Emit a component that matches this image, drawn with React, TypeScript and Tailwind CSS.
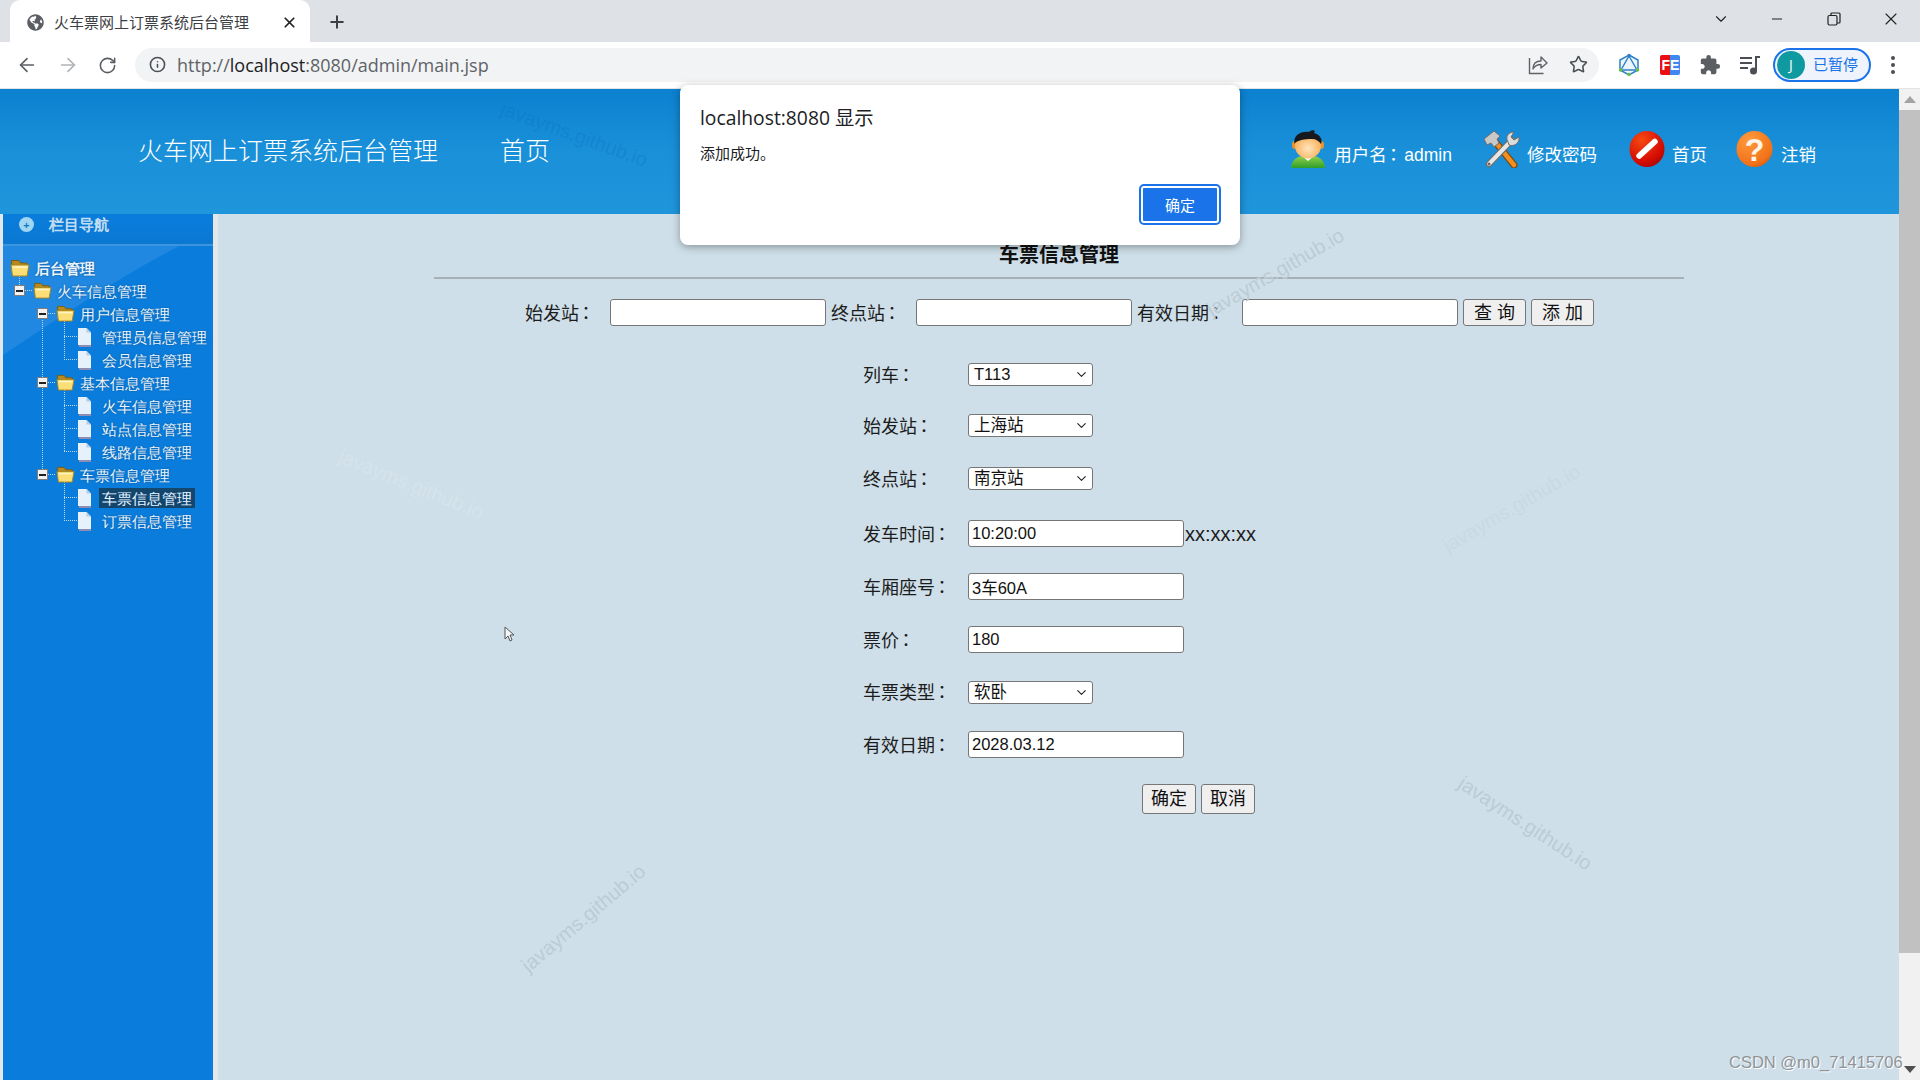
import { ArrowLeft, ArrowRight, ChevronDown, Info, Minus, Plus, RotateCw, Star, X } from 'lucide-react'
import { FaGlobeAmericas } from 'react-icons/fa'
import { MdExtension } from 'react-icons/md'

const fontUi = "font-['Open_Sans','Noto_Sans_CJK_SC',sans-serif]"

const treeRows = [
  { level: 0, kind: 'root', label: '后台管理' },
  { level: 1, kind: 'folder', label: '火车信息管理' },
  { level: 2, kind: 'folder', label: '用户信息管理' },
  { level: 3, kind: 'doc', label: '管理员信息管理' },
  { level: 3, kind: 'doc', label: '会员信息管理' },
  { level: 2, kind: 'folder', label: '基本信息管理' },
  { level: 3, kind: 'doc', label: '火车信息管理' },
  { level: 3, kind: 'doc', label: '站点信息管理' },
  { level: 3, kind: 'doc', label: '线路信息管理' },
  { level: 2, kind: 'folder', label: '车票信息管理' },
  { level: 3, kind: 'doc', label: '车票信息管理', selected: true },
  { level: 3, kind: 'doc', label: '订票信息管理' },
]

const watermarks = [
  { cls: 'left-[497px] top-[118px] rotate-[20deg] text-[#0b6fb8]/30' },
  { cls: 'left-[1198px] top-[256px] rotate-[-30deg] text-[#bccbd5]' },
  { cls: 'left-[334px] top-[468px] rotate-[22deg] text-[#d6e3eb]' },
  { cls: 'left-[1434px] top-[492px] rotate-[-30deg] text-[#c9d9e3]' },
  { cls: 'left-[1448px] top-[807px] rotate-[33deg] text-[#bccbd5]' },
  { cls: 'left-[506px] top-[902px] rotate-[-40deg] text-[#bccbd5]' },
]

function Colon() {
  return <span className="font-['Noto_Sans_CJK_TC',sans-serif] -ml-[2px]">：</span>
}

function FolderIcon({ className }: { className?: string }) {
  return (
    <svg viewBox="0 0 20 18" className={className}>
      <path d="M1.5 1.5h7l2 2.5h6.5v4H2z" fill="#b88a1c" stroke="#7a5c10" strokeWidth="1" />
      <path d="M1 6h18l-2 11H2.5z" fill="#fbdf76" stroke="#a9851f" strokeWidth="1" />
      <path d="M3 8h14.5" stroke="#fff6c8" strokeWidth="1.6" />
    </svg>
  )
}

function DocIcon() {
  return (
    <svg viewBox="0 0 16 20" className="w-[16px] h-[20px]">
      <path d="M2 3.5h8l4 4V20H2z" fill="#8f8db4" />
      <path d="M1 1h8.5L14 5.5V18H1z" fill="#e6f1fb" />
      <path d="M9.5 1v4.5H14z" fill="#b8cbe0" />
    </svg>
  )
}

function Toggle() {
  return (
    <span className="flex items-center justify-center w-[11px] h-[11px] bg-[#f2f2f2] border border-[#7d7d7d]">
      <span className="w-[7px] h-[2px] bg-[#222]" />
    </span>
  )
}

function TreeRow({ level, kind, label, selected }: { level: number; kind: string; label: string; selected?: boolean }) {
  const textStyle = 'whitespace-nowrap text-[15px] leading-[20px] text-[#eaf5fd] [text-shadow:0_0_2px_#0b4f8c]'
  if (kind === 'root') {
    return (
      <div className="h-[23px] flex items-center pl-[7px]">
        <FolderIcon className="w-[20px] h-[18px]" />
        <span className={`ml-[5px] font-bold ${textStyle}`}>{label}</span>
      </div>
    )
  }
  if (kind === 'folder') {
    return (
      <div className={`h-[23px] flex items-center ${level === 1 ? 'pl-[11px]' : 'pl-[34px]'}`}>
        <Toggle />
        <FolderIcon className="ml-[8px] w-[19px] h-[17px]" />
        <span className={`ml-[5px] ${textStyle}`}>{label}</span>
      </div>
    )
  }
  return (
    <div className="h-[23px] flex items-center pl-[74px]">
      <DocIcon />
      <span className={`ml-[6px] px-[3px] ${textStyle} ${selected ? 'bg-[#15466b] text-[#c4e2f4]' : ''}`}>{label}</span>
    </div>
  )
}

function TreeLines() {
  const h = [
    [19, 33, 34.5],
    [42, 56, 57.5],
    [64, 77, 80.5],
    [64, 77, 103.5],
    [42, 56, 126.5],
    [64, 77, 149.5],
    [64, 77, 172.5],
    [64, 77, 195.5],
    [42, 56, 218.5],
    [64, 77, 241.5],
    [64, 77, 264.5],
  ]
  const v = [
    [19, 20, 34],
    [42, 62, 218],
    [64, 65, 103.5],
    [64, 134, 195.5],
    [64, 226, 264.5],
  ]
  return (
    <svg className="absolute left-[-3px] top-0 w-[210px] h-[280px]" stroke="#b9d8f0" strokeWidth="1" strokeDasharray="1 1">
      {h.map(([a, b, y], i) => (
        <line key={i} x1={a} x2={b} y1={y} y2={y} />
      ))}
      {v.map(([x, a, b], i) => (
        <line key={i} x1={x + 0.5} x2={x + 0.5} y1={a} y2={b} />
      ))}
    </svg>
  )
}

function Sidebar() {
  return (
    <div className="relative w-[218px] shrink-0 flex border-l-[3px] border-[#e3e8ec] border-r-[5px] border-r-[#e4e7ea] bg-[#0a7ddc] overflow-hidden">
      <svg className="absolute left-0 top-[31px] w-[190px] h-[110px]" viewBox="0 0 190 110">
        <path d="M0 0H178C120 30 60 70 0 110z" fill="#3c97e4" opacity="0.45" />
      </svg>
      <div className="relative w-full">
        <div className="h-[32px] flex items-start pl-[16px] border-b-2 border-[#3d94de] bg-gradient-to-b from-[#0a7ddc] to-[#0b78d2]">
          <span className="mt-[3px] w-[15px] h-[15px] rounded-full bg-[#9fd6f2] flex items-center justify-center text-[#1477c8] text-[11px] leading-none font-bold">+</span>
          <span className="ml-[15px] text-[15px] leading-[20px] font-bold text-[#c5dff2]">栏目导航</span>
        </div>
        <div className="relative mt-[10px]">
          <TreeLines />
          <div className="relative">
            {treeRows.map((row, i) => (
              <TreeRow key={i} {...row} />
            ))}
          </div>
        </div>
      </div>
    </div>
  )
}

function SearchField({ label, width }: { label: string; width: string }) {
  return (
    <>
      <span className={`${width} shrink-0 pt-[2px]`}>{label}<Colon /></span>
      <input readOnly className="w-[216px] h-[27px] bg-white border-[1.5px] border-[#767676] rounded-[3px]" />
    </>
  )
}

function SmallButton({ label, className }: { label: string; className: string }) {
  return (
    <button className={`${className} bg-[#efefef] border border-[#767676] rounded-[3px] text-[18px] leading-none text-[#111]`}>{label}</button>
  )
}

function FormRow({ label, className, children }: { label: string; className: string; children: React.ReactNode }) {
  return (
    <div className={`flex items-center pl-[645px] ${className}`}>
      <span className="w-[105px] shrink-0 pt-[1px]">{label}<Colon /></span>
      {children}
    </div>
  )
}

function SelectBox({ value }: { value: string }) {
  return (
    <div className="relative w-[125px] h-[23px] bg-white border border-[#767676] rounded-[3px] flex items-center pl-[5px] text-[16.5px] leading-none text-[#111]">
      {value}
      <ChevronDown className="absolute right-[3px] top-[3px] w-[15px] h-[15px] text-[#222]" strokeWidth={1.8} />
    </div>
  )
}

function TextBox({ value }: { value: string }) {
  return (
    <input
      readOnly
      value={value}
      className="w-[216px] h-[27px] bg-white border-[1.5px] border-[#767676] rounded-[3px] px-[3px] text-[16.5px] text-[#111]"
    />
  )
}

function TicketForm() {
  return (
    <div className="relative flex-1 bg-[#cfdfe9] font-['Liberation_Sans','Noto_Sans_CJK_SC',sans-serif] text-[18px] text-[#1c1c1c]">
      <div className="pt-[27px] pl-[216px] pr-[215px]">
        <div className="text-center text-[20px] leading-[28px] font-bold text-[#111]">车票信息管理</div>
        <div className="mt-[8px] h-[2px] bg-[#a9b0b5]" />
      </div>
      <div className="mt-[20px] flex items-center pl-[307px] h-[27px]">
        <SearchField label="始发站" width="w-[85px]" />
        <span className="w-[5px]" />
        <SearchField label="终点站" width="w-[85px]" />
        <span className="w-[5px]" />
        <SearchField label="有效日期" width="w-[105px]" />
        <SmallButton label="查 询" className="ml-[5px] w-[63px] h-[27px]" />
        <SmallButton label="添 加" className="ml-[5px] w-[63px] h-[27px]" />
      </div>
      <FormRow label="列车" className="mt-[37px] h-[23px]">
        <SelectBox value="T113" />
      </FormRow>
      <FormRow label="始发站" className="mt-[28px] h-[23px]">
        <SelectBox value="上海站" />
      </FormRow>
      <FormRow label="终点站" className="mt-[30px] h-[23px]">
        <SelectBox value="南京站" />
      </FormRow>
      <FormRow label="发车时间" className="mt-[30px] h-[27px]">
        <TextBox value="10:20:00" />
        <span className="ml-[1px] text-[20px]">xx:xx:xx</span>
      </FormRow>
      <FormRow label="车厢座号" className="mt-[26px] h-[27px]">
        <TextBox value="3车60A" />
      </FormRow>
      <FormRow label="票价" className="mt-[26px] h-[27px]">
        <TextBox value="180" />
      </FormRow>
      <FormRow label="车票类型" className="mt-[27px] h-[24px]">
        <SelectBox value="软卧" />
      </FormRow>
      <FormRow label="有效日期" className="mt-[27px] h-[27px]">
        <TextBox value="2028.03.12" />
      </FormRow>
      <div className="mt-[26px] flex pl-[924px] gap-[5px]">
        <SmallButton label="确定" className="w-[54px] h-[30px]" />
        <SmallButton label="取消" className="w-[54px] h-[30px]" />
      </div>
    </div>
  )
}

function AvatarIcon() {
  return (
    <svg viewBox="0 0 36 38" className="w-[36px] h-[38px]">
      <defs>
        <linearGradient id="shirt" x1="0" y1="0" x2="0" y2="1">
          <stop offset="0" stopColor="#8fd14a" />
          <stop offset="1" stopColor="#2f9f2a" />
        </linearGradient>
        <radialGradient id="face" cx="0.5" cy="0.6" r="0.6">
          <stop offset="0" stopColor="#ffe6bd" />
          <stop offset="1" stopColor="#f7a94e" />
        </radialGradient>
      </defs>
      <path d="M1 38c0-7 5-11 11-12l6 3 6-3c6 1 11 5 11 12z" fill="url(#shirt)" />
      <path d="M12 26l6 5 6-5-2-3h-8z" fill="#fff" />
      <ellipse cx="4.5" cy="15" rx="2.5" ry="4" fill="#e7952f" />
      <ellipse cx="31.5" cy="15" rx="2.5" ry="4" fill="#e7952f" />
      <ellipse cx="18" cy="16" rx="13" ry="12.5" fill="url(#face)" />
      <path d="M4.5 14C3 6 10 1 19 2c2-2 5-2 6-1-1 1-1 2-1 2 6 2 9 6 7 11-2-3-5-5-9-5-7 0-15 1-18 5z" fill="#16191d" />
    </svg>
  )
}

function ToolsIcon() {
  return (
    <svg viewBox="0 0 40 38" className="w-[40px] h-[38px]">
      <path d="M33 35L12 9" stroke="#7a4a12" strokeWidth="7" strokeLinecap="round" />
      <path d="M33 35L12 9" stroke="#f18f1f" strokeWidth="4.5" strokeLinecap="round" />
      <path d="M3 9l10-8 6 5-3 3 2 4-5 4-3-4-4 2z" fill="#c8c8c8" stroke="#6d6d6d" strokeWidth="1" />
      <path d="M8 34L31 10" stroke="#6d6d6d" strokeWidth="6.5" strokeLinecap="round" />
      <path d="M8 34L31 10" stroke="#e6e6e6" strokeWidth="4" strokeLinecap="round" />
      <path d="M27 12c-3-5 0-10 6-10l-3 5 3 3 5-3c1 6-5 10-10 8z" fill="#dcdcdc" stroke="#6d6d6d" strokeWidth="1" />
      <circle cx="8" cy="34" r="1.5" fill="#666" />
    </svg>
  )
}

function HomeIcon() {
  return (
    <svg viewBox="0 0 37 38" className="w-[36px] h-[38px]">
      <defs>
        <radialGradient id="red" cx="0.35" cy="0.25" r="0.85">
          <stop offset="0" stopColor="#f64a10" />
          <stop offset="0.7" stopColor="#d60d02" />
          <stop offset="1" stopColor="#a50505" />
        </radialGradient>
      </defs>
      <ellipse cx="18.5" cy="19" rx="18" ry="18.5" fill="url(#red)" />
      <path d="M10.5 26L26.5 11.5" stroke="#fff" strokeWidth="6" strokeLinecap="round" />
    </svg>
  )
}

function HelpIcon() {
  return (
    <svg viewBox="0 0 38 38" className="w-[37px] h-[38px]">
      <defs>
        <radialGradient id="orange" cx="0.35" cy="0.25" r="0.9">
          <stop offset="0" stopColor="#ff9a3a" />
          <stop offset="0.75" stopColor="#f1721a" />
          <stop offset="1" stopColor="#c65208" />
        </radialGradient>
      </defs>
      <ellipse cx="19" cy="19" rx="18.5" ry="18.5" fill="url(#orange)" />
      <text x="19" y="31" textAnchor="middle" fontFamily="Liberation Sans" fontWeight="700" fontSize="33" fill="#fdf3e6">?</text>
    </svg>
  )
}

function GraphqlIcon() {
  return (
    <svg viewBox="0 0 22 24" className="w-[22px] h-[24px]">
      <path d="M11 2L20 7v10l-9 5-9-5V7z" fill="#d5ecf9" fillOpacity="0.5" stroke="#2f80c8" strokeWidth="1.5" />
      <path d="M11 3L19 17H3z" fill="none" stroke="#2f80c8" strokeWidth="1.4" />
      <circle cx="11" cy="2.5" r="1.8" fill="#2f80c8" />
      <circle cx="2.5" cy="17" r="1.8" fill="#6cc04a" />
      <circle cx="19.5" cy="17" r="1.8" fill="#6cc04a" />
      <circle cx="11" cy="21.5" r="1.8" fill="#6cc04a" />
    </svg>
  )
}

function FeBadge() {
  return (
    <div className="relative flex w-[20px] h-[20px] rounded-[2px] overflow-hidden text-[14px] leading-[20px] font-bold text-white font-['Liberation_Sans',sans-serif]">
      <span className="w-[10px] bg-[#ea0f12] text-right">F</span>
      <span className="w-[10px] bg-[#3f86f0]">E</span>
    </div>
  )
}

function MusicIcon() {
  return (
    <svg viewBox="0 0 22 20" className="w-[22px] h-[20px]" fill="none" stroke="#4b4f55" strokeWidth="2">
      <path d="M1 3h12M1 8h12M1 13h8" />
      <path d="M17 16V2h4" />
      <circle cx="14.5" cy="16" r="2.5" fill="#4b4f55" />
    </svg>
  )
}

function ShareIcon() {
  return (
    <svg viewBox="0 0 20 20" className="w-[20px] h-[20px]" fill="none" stroke="#5f6368" strokeWidth="1.4">
      <path d="M1.5 3v15.5h14" />
      <path d="M5 14c0-5 3-8 8-8V2l6 6-6 5V9.5c-3 0-6 1-8 4.5z" strokeLinejoin="round" />
    </svg>
  )
}

function TabStrip() {
  return (
    <div className={`h-[42px] bg-[#dee1e6] flex ${fontUi}`}>
      <div className="ml-[10px] w-[300px] h-[42px] bg-white rounded-t-[10px] flex items-center pl-[17px] pr-[12px] pt-[2px]">
        <FaGlobeAmericas className="w-[17px] h-[17px] text-[#5a5e63]" />
        <span className="ml-[10px] text-[15px] leading-none text-[#3c4043]">火车票网上订票系统后台管理</span>
        <X className="ml-auto w-[17px] h-[17px] text-[#222]" strokeWidth={2.4} />
      </div>
      <div className="ml-[17px] flex items-center pt-[2px]">
        <Plus className="w-[20px] h-[20px] text-[#3c4043]" strokeWidth={2.4} />
      </div>
      <div className="ml-auto flex items-center pb-[5px]">
        <ChevronDown className="w-[18px] h-[18px] text-[#222]" strokeWidth={1.5} />
        <Minus className="ml-[39px] w-[16px] h-[16px] text-[#222]" strokeWidth={1.5} />
        <svg viewBox="0 0 14 14" className="ml-[42px] w-[14px] h-[14px]" fill="none" stroke="#222" strokeWidth="1.2">
          <rect x="1" y="3.5" width="9" height="9.5" rx="1.5" />
          <path d="M4 3V2a1 1 0 0 1 1-1h7a1 1 0 0 1 1 1v8a1 1 0 0 1-1 1h-2" />
        </svg>
        <X className="ml-[40px] mr-[19px] w-[20px] h-[20px] text-[#222]" strokeWidth={1.3} />
      </div>
    </div>
  )
}

function Toolbar() {
  return (
    <div className={`h-[47px] bg-white border-b border-[#e4e4e4] flex items-center ${fontUi}`}>
      <ArrowLeft className="ml-[16px] w-[22px] h-[22px] text-[#5a5e63]" strokeWidth={1.8} />
      <ArrowRight className="ml-[19px] w-[22px] h-[22px] text-[#b0b3b7]" strokeWidth={1.8} />
      <RotateCw className="ml-[19px] w-[19px] h-[19px] text-[#5a5e63]" strokeWidth={2} />
      <div className="ml-[18px] w-[1464px] h-[34px] rounded-full bg-[#f1f3f4] flex items-center pl-[14px] pr-[10px] -mt-[1px]">
        <Info className="w-[17px] h-[17px] text-[#4b4f55]" strokeWidth={2.2} />
        <span className="ml-[11px] text-[18px] leading-none text-[#5f6368]">
          http://<span className="text-[#202124]">localhost</span>:8080/admin/main.jsp
        </span>
        <span className="ml-auto"><ShareIcon /></span>
        <Star className="ml-[21px] mr-[1px] w-[19px] h-[19px] text-[#4b4f55]" strokeWidth={2} />
      </div>
      <div className="ml-[19px]"><GraphqlIcon /></div>
      <div className="ml-[20px]"><FeBadge /></div>
      <MdExtension className="ml-[19px] w-[22px] h-[22px] text-[#5a5e63]" />
      <div className="ml-[18px]"><MusicIcon /></div>
      <div className="ml-[12px] w-[98px] h-[34px] rounded-full border-2 border-[#1a73e8] bg-[#eef3fc] flex items-center pl-[2px] -mt-[1px]">
        <span className="w-[28px] h-[28px] rounded-full bg-[#0f9aa1] text-white text-[14px] flex items-center justify-center">J</span>
        <span className="ml-[8px] text-[15px] leading-none text-[#1a73e8]">已暂停</span>
      </div>
      <div className="ml-[20px] flex flex-col gap-[3px]">
        <span className="w-[4px] h-[4px] rounded-full bg-[#4b4f55]" />
        <span className="w-[4px] h-[4px] rounded-full bg-[#4b4f55]" />
        <span className="w-[4px] h-[4px] rounded-full bg-[#4b4f55]" />
      </div>
    </div>
  )
}

function HeaderLink({ icon, children, className }: { icon: React.ReactNode; children: React.ReactNode; className: string }) {
  return (
    <div className={`flex items-end ${className}`}>
      {icon}
      <span className="mb-[1px] text-[17.5px] leading-[24px] text-white whitespace-nowrap">{children}</span>
    </div>
  )
}

function TopBanner() {
  return (
    <div className="h-[125px] shrink-0 bg-gradient-to-b from-[#0b81cf] via-[#1a90d9] to-[#1f95dc] flex items-center pl-[138px] font-['Liberation_Sans','Noto_Sans_CJK_SC',sans-serif] text-white">
      <span className="text-[25px] font-light leading-none">火车网上订票系统后台管理</span>
      <span className="ml-[62px] text-[25px] font-light leading-none">首页</span>
      <div className="ml-auto mr-[83px] mb-[5px] flex">
        <HeaderLink icon={<AvatarIcon />} className="gap-[8px]">用户名<Colon /><span className="ml-[2px]">admin</span></HeaderLink>
        <HeaderLink icon={<ToolsIcon />} className="ml-[29px] gap-[6px]">修改密码</HeaderLink>
        <HeaderLink icon={<HomeIcon />} className="ml-[32px] gap-[7px]">首页</HeaderLink>
        <HeaderLink icon={<HelpIcon />} className="ml-[29px] gap-[8px]">注销</HeaderLink>
      </div>
    </div>
  )
}

function ScrollRail() {
  return (
    <div className="w-[21px] shrink-0 bg-[#f1f1f1] flex flex-col items-center">
      <div className="h-[21px] flex items-center justify-center">
        <span className="w-0 h-0 border-x-[6px] border-x-transparent border-b-[7px] border-b-[#a3a3a3]" />
      </div>
      <div className="w-full h-[843px] bg-[#c1c1c1]" />
      <div className="mt-auto h-[21px] flex items-center justify-center">
        <span className="w-0 h-0 border-x-[6px] border-x-transparent border-t-[7px] border-t-[#505050]" />
      </div>
    </div>
  )
}

function AlertDialog() {
  return (
    <div className={`absolute left-[680px] top-[85px] w-[560px] h-[160px] bg-white rounded-[8px] shadow-[0_2px_8px_rgba(0,0,0,0.35)] px-[20px] pt-[20px] ${fontUi}`}>
      <div className="text-[19.3px] leading-[26px] text-[#202124]">localhost:8080 显示</div>
      <div className="mt-[11px] text-[15px] leading-[22px] text-[#202124]">添加成功。</div>
      <button className="absolute right-[19px] top-[99px] w-[82px] h-[41px] rounded-[5px] bg-[#1a73e8] border-2 border-[#1a73e8] pt-[1px] text-white text-[15px] outline-2 outline-white -outline-offset-4">确定</button>
    </div>
  )
}

function Watermarks() {
  return (
    <>
      {watermarks.map((w, i) => (
        <span key={i} className={`absolute whitespace-nowrap text-[20px] leading-[32px] font-['Liberation_Sans',sans-serif] pointer-events-none ${w.cls}`}>
          javayms.github.io
        </span>
      ))}
    </>
  )
}

export default function App() {
  return (
    <div className="relative w-[1920px] h-[1080px] overflow-hidden flex flex-col bg-white">
      <TabStrip />
      <Toolbar />
      <div className="flex-1 flex min-h-0">
        <div className="flex-1 flex flex-col min-w-0">
          <TopBanner />
          <div className="flex-1 flex min-h-0">
            <Sidebar />
            <TicketForm />
          </div>
        </div>
        <ScrollRail />
      </div>
      <Watermarks />
      <AlertDialog />
      <svg className="absolute left-[504px] top-[626px] w-[12px] h-[16px]" viewBox="0 0 12 16">
        <path d="M1 1v12l3-3 2 5 2-1-2-5h4z" fill="#f4f6f8" stroke="#555" strokeWidth="1" />
      </svg>
      <span className="absolute left-[1729px] top-[1052px] text-[16.5px] leading-[20px] text-[#8f9498] [text-shadow:1px_1px_0_#fff] font-['Liberation_Sans',sans-serif]">CSDN @m0_71415706</span>
    </div>
  )
}
